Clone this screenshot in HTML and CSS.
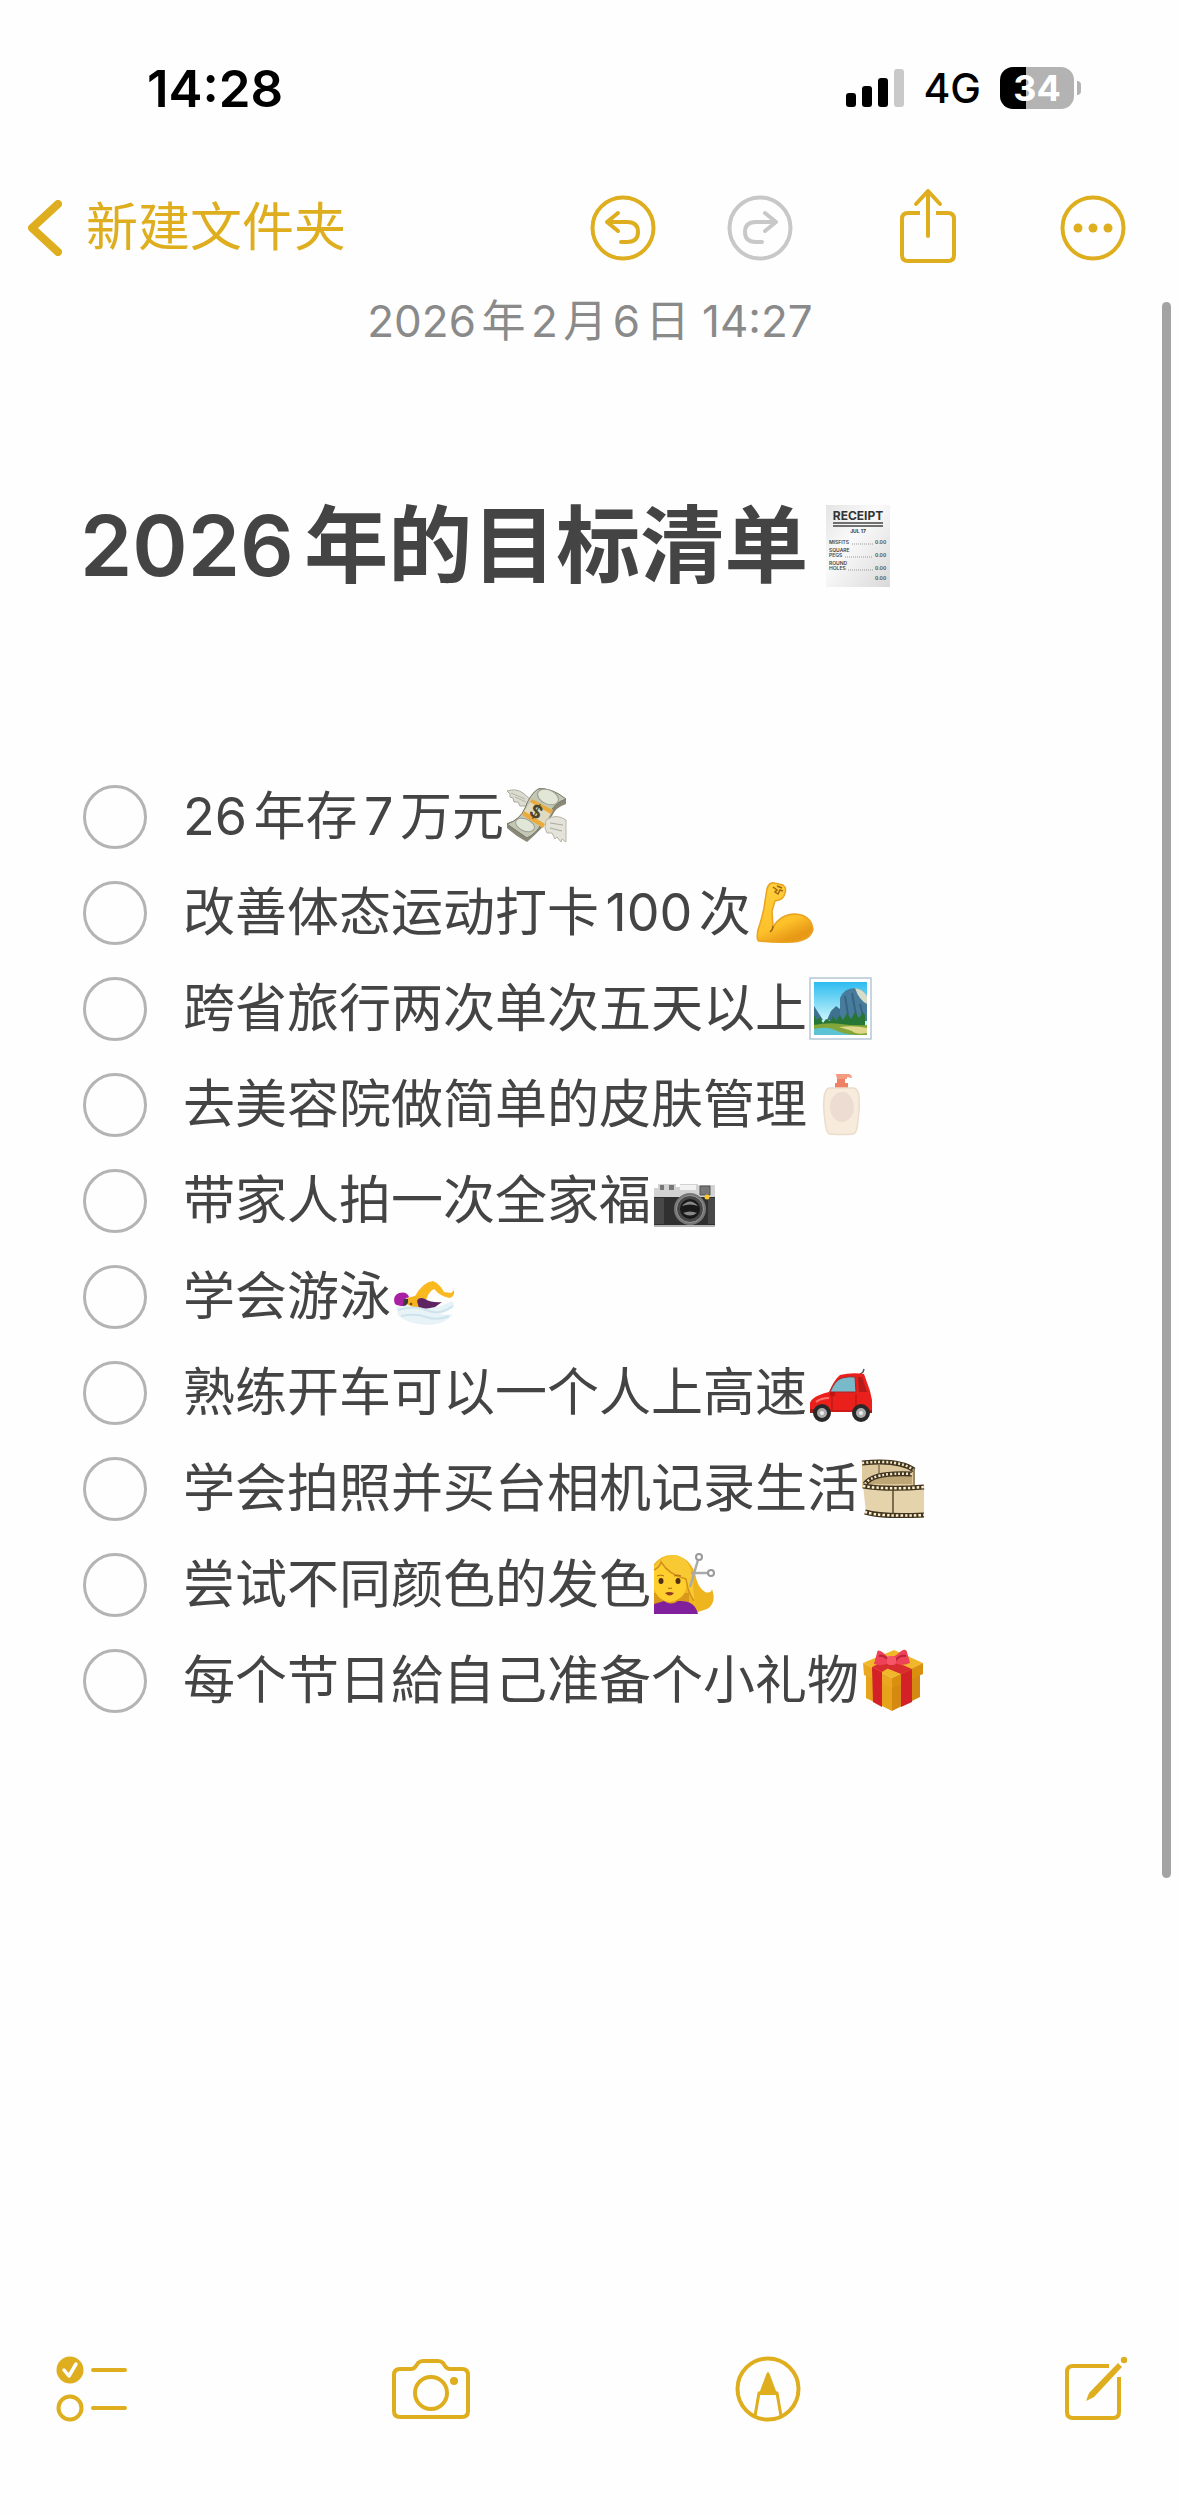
FILE: index.html
```html
<!DOCTYPE html>
<html lang="zh-CN">
<head>
  <meta charset="UTF-8">
  <meta name="viewport" content="width=device-width, initial-scale=1.0">
  <title>2026年的目标清单</title>
  <link rel="stylesheet" href="styles.css">
</head>
<body>
  <div class="status-bar">
    <span class="time">14:28</span>
    <div class="status-right">
      <svg class="signal" width="58" height="38" viewBox="0 0 58 38">
        <rect x="0" y="24" width="10" height="14" rx="3"/>
        <rect x="16" y="17" width="10" height="21" rx="3"/>
        <rect x="32" y="9" width="10" height="29" rx="3"/>
        <rect x="48" y="0" width="10" height="38" rx="3" fill="#c9c9c9"/>
      </svg>
      <span class="network">4G</span>
      <div class="battery"><span>34</span></div>
    </div>
  </div>

  <nav class="top-bar">
    <a class="back" href="#">
      <svg width="34" height="56" viewBox="0 0 34 56"><path d="M30 4L4 28l26 24" stroke-width="8"/></svg>
      <span>新建文件夹</span>
    </a>
    <div class="actions">
      <button type="button" aria-label="撤销">
        <svg width="66" height="66" viewBox="0 0 66 66">
          <circle cx="33" cy="33" r="30.500"/>
          <path d="M28 18L17 27l11 9M17 27h20q11 0 11 10t-11 10h-6" stroke-width="4"/>
        </svg>
      </button>
      <button type="button" aria-label="重做" class="redo" disabled>
        <svg width="66" height="66" viewBox="0 0 66 66">
          <circle cx="33" cy="33" r="30.500"/>
          <path d="M38 18l11 9-11 9M49 27H29q-11 0-11 10t11 10h6" stroke-width="4"/>
        </svg>
      </button>
      <button type="button" aria-label="分享" class="share">
        <svg width="58" height="78" viewBox="0 0 58 78">
          <path d="M21 27H9q-6 0-6 6v36q0 6 6 6h40q6 0 6-6V33q0-6-6-6H37" stroke-linecap="butt"/>
          <path d="M29 50V5M17 18L29 5l12 13" stroke-width="4"/>
        </svg>
      </button>
      <button type="button" aria-label="更多" class="more">
        <svg width="66" height="66" viewBox="0 0 66 66">
          <circle cx="33" cy="33" r="30.500"/>
          <g class="solid"><circle cx="18" cy="33" r="4.500"/><circle cx="33" cy="33" r="4.500"/><circle cx="48" cy="33" r="4.500"/></g>
        </svg>
      </button>
    </div>
  </nav>

  <main class="note">
    <div class="scrollbar"></div>
    <time class="date">2026年2月6日 14:27</time>
    <h1>2026年的目标清单
      <svg class="receipt" width="64" height="84" viewBox="0 0 64 84">
        <defs><linearGradient id="paper" x2="1" y2="1"><stop stop-color="#e4e4e4"/><stop offset=".4" stop-color="#fafafa"/><stop offset="1" stop-color="#d9d9d9"/></linearGradient></defs>
        <path d="M0 1h64v82H0z" fill="url(#paper)"/>
        <path d="M7 19h50M7 22h50" stroke="#444" stroke-width="1.500"/>
        <g font-weight="700" fill="#333">
          <text x="32" y="16" font-size="12" text-anchor="middle">RECEIPT</text>
          <text x="32" y="29" font-size="5" text-anchor="middle">JUL 17</text>
        </g>
        <g font-weight="600" font-size="5" fill="#444">
          <text x="3" y="40">MISFITS</text><text x="49" y="40">0.00</text>
          <text x="3" y="48">SQUARE</text><text x="3" y="53">PEGS</text><text x="49" y="53">0.00</text>
          <text x="3" y="61">ROUND</text><text x="3" y="66">HOLES</text><text x="49" y="66">0.00</text>
          <text x="49" y="76">0.00</text>
        </g>
        <path d="M26 40h21M19 53h28M22 66h25" stroke="#999" stroke-dasharray="1 1"/>
      </svg>
    </h1>

    <ul class="goals">
      <li>
        <input type="checkbox" id="goal1">
        <label for="goal1">26年存7万元<svg class="emoji" viewBox="0 0 64 64">
          <path d="M24 25L19 21 14 21 12 17 8 17 7 13 4 12 4 9 1 6Q10 3 17 8L25 15z" fill="#dddcd0" stroke="#aaa99c"/>
          <path d="M5 8l14 6M9 12l11 5" stroke="#b5b4a8"/>
          <path d="M32 4Q37 0 60 14V19Q50 22 46 31 36 44 21 57 11 52 1 43V38Q14 35 19 23 24 9 32 4z" fill="#898877"/>
          <path d="M32 4Q45 2 60 14 50 17 45 26L35 39Q31 48 21 53L1 39Q14 35 19 23 24 9 32 4z" fill="#c3c7b5" stroke="#777967"/>
          <ellipse cx="42" cy="12" rx="11" ry="7" transform="rotate(24 42 12)" fill="#e2e6d7" stroke="#9da18e"/>
          <ellipse cx="19" cy="40" rx="10" ry="6" transform="rotate(24 19 40)" fill="#e2e6d7" stroke="#9da18e"/>
          <path d="M26 14l21 11-10 18-21-13z" fill="#e0dac1"/>
          <path d="M26 14l21 11-2 4-21-12zM18 26l21 13-2 4-21-13z" fill="#e9ab3c"/>
          <text x="30" y="33" font-size="18" font-weight="700" text-anchor="middle" transform="rotate(28 30 27)" fill="#4d452c">$</text>
          <path d="M40 35Q50 28 60 35V57l-4-3-1 3-4-5-2 2-3-6-5 0-2-5z" fill="#e4e3d9" stroke="#b7b5a8"/>
          <path d="M44 38l13 2M44 43l12 3" stroke="#aaa99c"/>
        </svg></label>
      </li>
      <li>
        <input type="checkbox" id="goal2">
        <label for="goal2">改善体态运动打卡100次<svg class="emoji" viewBox="0 0 64 64">
          <defs><linearGradient id="skin" x2=".4" y2="1"><stop stop-color="#ffd23f"/><stop offset=".75" stop-color="#fdc12a"/><stop offset="1" stop-color="#e89a17"/></linearGradient></defs>
          <path d="M14 8Q16 1 21 2L30 4Q34 7 32 12 31 19 22 20L19 30 20 46Q28 33 42 33 58 34 60 48 58 59 40 61 22 62 6 60 3 59 5 49 11 31 12 20z" fill="url(#skin)" stroke="#e9a320" stroke-width="1.500"/>
          <path d="M20 6l4 3-2 2 3 2 2-4 3 1M24 5l5 2M20 45q0 4-3 6" stroke="#9d6413" stroke-width="1.500" fill="none"/>
        </svg></label>
      </li>
      <li>
        <input type="checkbox" id="goal3">
        <label for="goal3">跨省旅行两次单次五天以上<svg class="emoji" viewBox="0 0 64 64">
          <defs><linearGradient id="sky" x2="0" y2="1"><stop stop-color="#2cbcf0"/><stop offset=".7" stop-color="#c4f3fa"/></linearGradient></defs>
          <path d="M1 1h61v61H1z" fill="#fff" stroke="#b5c8d8" stroke-width="1.500"/>
          <path d="M5 5h53v53H5z" fill="url(#sky)"/>
          <path d="M31 44V21q4-10 15-10 8 1 12 8v25z" fill="#487c9c"/>
          <path d="M46 11q8 1 12 8v8q-8-4-12-16z" fill="#d7ddc8"/>
          <path d="M36 19l3 19M43 16l4 22M51 27l3 12" stroke="#386382" stroke-width="2"/>
          <path d="M5 29l9 14H5zM18 43l4-9 5-5 4 3v13z" fill="#3e718f"/>
          <path d="M5 50V38l3 5 3-3 3 6 3-4 4 2 3-5 3 5 4-6 3 5 4-7 4 6 4-7 4 6 4-6 2 3v16H5z" fill="#287636"/>
          <path d="M5 48q14-3 27-1t26 1v10H5z" fill="#82a638"/>
          <path d="M5 52q13-3 21 1t20 5H5z" fill="#5bc3d4"/>
          <path d="M30 50q16-2 28 1v5q-11 2-15-2z" fill="#dfd78c"/>
        </svg></label>
      </li>
      <li>
        <input type="checkbox" id="goal4">
        <label for="goal4">去美容院做简单的皮肤管理<svg class="emoji" viewBox="0 0 64 64">
          <path d="M28 5h8v5h3v6H26v-6h2z" fill="#ef8064"/>
          <path d="M27 1h13q3 1 3 4l-5-1v2H28z" fill="#f49a80"/>
          <path d="M20 15h25q4 1 5 8 1 12-1 24-1 14-5 14-11 1-23 0-4 0-5-13-2-14-1-23 1-9 5-10z" fill="#f7ebdc" stroke="#ebdccb" stroke-width="1.500"/>
          <ellipse cx="33" cy="34" rx="12" ry="15" fill="#ecdcd1"/>
        </svg></label>
      </li>
      <li>
        <input type="checkbox" id="goal5">
        <label for="goal5">带家人拍一次全家福<svg class="emoji" viewBox="0 0 64 64">
          <path d="M1 19h4v-4h18v3h4v-3h18v1h17v14H1z" fill="#d2d2d2"/>
          <path d="M7 16h4v5H7zM16 16h5v5h-5z" fill="#777"/>
          <path d="M27 16h16v5H27z" fill="#f2f2f2"/>
          <path d="M47 17h10v9H47z" fill="#777" stroke="#555"/>
          <path d="M1 28h61v28H1z" fill="#303030"/>
          <path d="M1 29h10v26H1zM55 29h7v26h-7z" fill="#484848"/>
          <path d="M1 57h61" stroke="#b5b5b5" stroke-width="2"/>
          <circle cx="37" cy="40" r="16" fill="#777"/>
          <circle cx="37" cy="40" r="13.500" fill="#484848" stroke="#999"/>
          <circle cx="37" cy="40" r="10" fill="#191919"/>
          <path d="M29 37q8-9 16 0-8-3-16 0zM30 44q7-3 14 0-7 5-14 0z" fill="#888"/>
          <circle cx="54" cy="28" r="2.500" fill="#ffc92e"/>
        </svg></label>
      </li>
      <li>
        <input type="checkbox" id="goal6">
        <label for="goal6">学会游泳<svg class="emoji" viewBox="0 0 64 64">
          <path d="M3 42q20-7 40 0 9-2 15-6 5 2 2 6-5 5-13 7 9 1 13 0-7 10-24 11Q14 59 5 50z" fill="#e8f3f8"/>
          <path d="M14 33l12-3 3 12q-8 2-15-3z" fill="#f4b41d"/>
          <path d="M22 31q8-14 18-15 7 3 11 11l7 1 3-3q1 6-4 8-9-1-16-9-5 2-8 11z" fill="#fbb920"/>
          <path d="M24 36q2-5 8-2 7 4 17 3l-7 5q-11 3-16 1z" fill="#5d2461"/>
          <path d="M2 39Q-1 31 6 28q8-2 10 4l-4 2-1 7q-6 0-9-2z" fill="#aa20a5"/>
          <path d="M11 34h4q1 7-5 7z" fill="#3d3938"/>
          <circle cx="18" cy="39" r="1.300" fill="#774513"/>
          <path d="M5 45q17-5 28 0 13 6 27-4M8 51q16-3 25 1 11 4 23-1" stroke="#cfe3ed" stroke-width="2" fill="none"/>
        </svg></label>
      </li>
      <li>
        <input type="checkbox" id="goal7">
        <label for="goal7">熟练开车可以一个人上高速<svg class="emoji" viewBox="0 0 64 64">
          <path d="M50 14l4-3 1-3" stroke="#555" stroke-width="1.500" fill="none"/>
          <path d="M1 51V42q2-7 19-11 5-12 11-17 12-3 24-1l6 17 2 9v12H2z" fill="#e9201c"/>
          <path d="M21 31q5-12 12-14 8-2 13-1l1 15z" fill="#78bac9" stroke="#a22a29"/>
          <path d="M49 16h4l5 15h-8z" fill="#b41c1c"/>
          <path d="M23 33v17h24V33" stroke="#b21413" fill="none"/>
          <path d="M20 37q-8 0-13 4" stroke="#ff746d" stroke-width="2" fill="none"/>
          <path d="M1 48h5v4H1zM58 49h5v3h-5z" fill="#a21b1c"/>
          <g fill="#adadad" stroke="#292929" stroke-width="4"><circle cx="13" cy="52" r="7"/><circle cx="52" cy="52" r="7"/></g>
          <g fill="#eee"><circle cx="13" cy="52" r="2"/><circle cx="52" cy="52" r="2"/></g>
          <path d="M21 31h5v4h-5z" fill="#c31415"/>
        </svg></label>
      </li>
      <li>
        <input type="checkbox" id="goal8">
        <label for="goal8">学会拍照并买台相机记录生活<svg class="emoji" viewBox="0 0 64 64">
          <path d="M1 4q34-3 53 7v20H1z" fill="#ddc99d"/>
          <path d="M1 6q37-4 52 7" stroke="#41351f" stroke-width="5" fill="none"/>
          <path d="M1 6q37-4 52 7" stroke="#f1e5c6" stroke-width="2.500" stroke-dasharray="2 2" fill="none"/>
          <path d="M18 8v17M53 11v17" stroke="#594a2c"/>
          <path d="M3 28q6-14 48-12v11H12L3 31z" fill="#bfa676"/>
          <path d="M4 27q8-12 47-10" stroke="#41351f" stroke-width="5" fill="none"/>
          <path d="M4 27q8-12 47-10" stroke="#f1e5c6" stroke-width="2.500" stroke-dasharray="2 2" fill="none"/>
          <path d="M2 28q25 3 61 0v33q-35 0-58-5z" fill="#e5d4ab"/>
          <path d="M2 29q25 4 61 1M4 55q16 5 59 3" stroke="#41351f" stroke-width="5" fill="none"/>
          <path d="M2 29q25 4 61 1M4 55q16 5 59 3" stroke="#fff1cf" stroke-width="2.500" stroke-dasharray="2.500 2" fill="none"/>
          <path d="M32 32v25" stroke="#594a2c" stroke-width="1.500"/>
        </svg></label>
      </li>
      <li>
        <input type="checkbox" id="goal9">
        <label for="goal9">尝试不同颜色的发色<svg class="emoji" viewBox="0 0 64 64">
          <path d="M1 11Q9 1 21 2 36 4 42 20 44 34 52 39 58 41 59 36 64 50 54 56L45 59H1z" fill="#efb51e"/>
          <path d="M1 40h35v19H1z" fill="#d99a1b"/>
          <path d="M11 43h13v9H11z" fill="#e3a01b"/>
          <path d="M1 51l10-3q7 5 14 0 17-1 20 13H1z" fill="#80209c"/>
          <path d="M1 17q5-3 7-8 8 10 26 17 1 20-17 23Q5 48 1 36z" fill="#ffd02d"/>
          <path d="M5 9Q13 1 23 2 35 5 39 20q1 17 3 31-7-10-9-24Q16 22 8 9 7 15 1 18v-5z" fill="#f9c934"/>
          <path d="M1 17q6-3 7-8 8 13 25 17 2 14 8 22" stroke="#d29217" stroke-width="1.500" fill="none"/>
          <g fill="#513114"><ellipse cx="8" cy="28" rx="2.500" ry="3"/><ellipse cx="25" cy="28" rx="2.500" ry="3"/></g>
          <path d="M4 23q4-2 7 0M21 23q4-2 7 0M15 35q2 1 4 0" stroke="#a86b14" fill="none"/>
          <path d="M12 40q4-2 9 0-4 5-9 0z" fill="#913e26"/>
          <path d="M37 34l8-27M38 20l17 0" stroke="#aaa" stroke-width="2.500"/>
          <g stroke="#999" fill="none" stroke-width="2"><circle cx="46" cy="4" r="3"/><circle cx="58" cy="20" r="3"/></g>
        </svg></label>
      </li>
      <li>
        <input type="checkbox" id="goal10">
        <label for="goal10">每个节日給自己准备个小礼物<svg class="emoji" viewBox="0 0 64 64">
          <path d="M5 21l26 12v29L5 49z" fill="#e7a31a"/>
          <path d="M31 33l28-13v28L31 62z" fill="#d48a12"/>
          <path d="M2 14L33 1l29 13-31 15z" fill="#f1b72a"/>
          <path d="M2 14l29 15v10L3 26z" fill="#eaa71f"/>
          <path d="M31 29l31-15v11L31 39z" fill="#d9900e"/>
          <path d="M11 18l10 5v35l-9-5zM40 25l11-5v33l-11 5z" fill="#d32127"/>
          <path d="M11 18l27-13 7 3-24 15zM23 8l28 12-11 5-27-11z" fill="#d92c31"/>
          <path d="M29 10Q16-3 16 4l-3 11q9 3 17-2zM32 10Q44-4 46 3l3 11q-8 4-18-1z" fill="#ed4257"/>
          <path d="M18 7q6-1 10 5M45 7q-7-1-11 5" stroke="#b92439" stroke-width="2" fill="none"/>
          <rect x="26" y="7" width="9" height="9" rx="3" fill="#f65668"/>
        </svg></label>
      </li>
    </ul>
  </main>

  <footer class="bottom-bar">
    <button type="button" aria-label="核对清单">
      <svg width="72" height="66" viewBox="0 0 72 66">
        <circle class="solid" cx="14" cy="14" r="13.500"/>
        <path d="M8 14l5 6 7-12" stroke="#fefefe" stroke-width="3.500"/>
        <circle cx="14" cy="52" r="11.500" stroke-width="4"/>
        <path d="M37 14h32M37 52h32" stroke-width="4"/>
      </svg>
    </button>
    <button type="button" aria-label="相机">
      <svg width="80" height="62" viewBox="0 0 80 62">
        <path d="M9 11h11q3 0 5-3l2-3q2-2 5-2h15q3 0 5 2l2 3q2 3 5 3h12q6 0 6 6v36q0 6-6 6H9q-6 0-6-6V17q0-6 6-6z" stroke-width="4"/>
        <circle cx="40" cy="35" r="16" stroke-width="4"/>
        <circle class="solid" cx="63" cy="23" r="4"/>
      </svg>
    </button>
    <button type="button" aria-label="标记">
      <svg width="66" height="66" viewBox="0 0 66 66">
        <circle cx="33" cy="33" r="30.500"/>
        <path class="solid" d="M33 16q1 0 2 3l6 16q2 1 2 4H23q0-3 2-4l6-16q1-3 2-3z"/>
        <path d="M24 37l-4 23M42 37l4 23" stroke-width="3"/>
      </svg>
    </button>
    <button type="button" aria-label="新建备忘录">
      <svg width="64" height="66" viewBox="0 0 64 66">
        <path d="M45 10H9q-6 0-6 6v40q0 6 6 6h40q6 0 6-6V21" stroke-width="4" stroke-linecap="butt"/>
        <path class="solid" d="M54 7l4 4-28 30-8 4 3-8z"/>
        <circle class="solid" cx="60" cy="4" r="3.200"/>
      </svg>
    </button>
  </footer>
</body>
</html>
```

FILE: styles.css
```css
* {
  box-sizing: border-box;
}
body {
  margin: 0;
  min-height: 100vh;
  display: flex;
  flex-direction: column;
  background: #fefefe;
  color: #444;
  font-family: Inter, "Noto Sans CJK SC", sans-serif;
  text-autospace: normal;
}
button {
  padding: 0;
  border: 0;
  background: none;
  color: inherit;
}
svg {
  display: block;
}

/* status bar */
.status-bar {
  display: flex;
  justify-content: space-between;
  align-items: center;
  height: 176px;
  padding: 0 98px 0 147px;
  color: #000;
}
.time {
  font-size: 51px;
  font-weight: 600;
}
.status-right {
  display: flex;
  align-items: center;
}
.network {
  margin: 0 19px;
  font-size: 41px;
  font-weight: 500;
}
.battery {
  position: relative;
  width: 74px;
  height: 42px;
  margin-right: 8px;
  border-radius: 13px;
  background: linear-gradient(to right, #000 35%, #b3b3b3 35%);
  color: #fff;
  font-size: 36px;
  font-weight: 700;
  line-height: 42px;
  text-align: center;
}
.battery::after {
  content: "";
  position: absolute;
  top: 14px;
  right: -7px;
  width: 4px;
  height: 14px;
  border-radius: 0 4px 4px 0;
  background: #b3b3b3;
}

/* toolbars */
.top-bar,
.bottom-bar {
  display: flex;
  justify-content: space-between;
  align-items: center;
  color: #deae1e;
}
.top-bar {
  height: 104px;
  padding: 0 54px 0 28px;
}
.top-bar svg,
.bottom-bar svg {
  fill: none;
  stroke: currentColor;
  stroke-width: 4;
  stroke-linecap: round;
  stroke-linejoin: round;
}
.top-bar .solid,
.bottom-bar .solid {
  fill: currentColor;
  stroke: none;
}
.back {
  display: flex;
  align-items: center;
  gap: 24px;
  color: inherit;
  font-size: 52px;
  line-height: 64px;
  text-decoration: none;
}
.actions {
  display: flex;
  align-items: center;
}
.redo {
  margin-left: 71px;
  color: #c8c8c8;
}
.share {
  margin-left: 106px;
  padding-bottom: 6px;
}
.more {
  margin-left: 103px;
}
.bottom-bar {
  margin-top: auto;
  padding: 0 52px 94px 56px;
}

/* note */
.note {
  position: relative;
  padding: 12px 80px 0;
}
.scrollbar {
  position: absolute;
  top: 22px;
  right: 9px;
  width: 9px;
  height: 1576px;
  border-radius: 5px;
  background: #a3a3a3;
}
.date {
  display: block;
  color: #8a8a8a;
  font-size: 44px;
  line-height: 58px;
  text-align: center;
}
h1 {
  display: flex;
  align-items: center;
  gap: 18px;
  margin: 136px 0 0;
  font-size: 84px;
  font-weight: 600;
  line-height: 120px;
}
.goals {
  display: flex;
  flex-direction: column;
  gap: 32px;
  margin: 179px 0 0;
  padding: 0 0 0 3px;
  list-style: none;
}
.goals li {
  display: flex;
  align-items: center;
  gap: 36px;
}
.goals input {
  appearance: none;
  flex: none;
  width: 64px;
  height: 64px;
  margin: 0;
  border: 3px solid #b4b4b4;
  border-radius: 50%;
}
.goals input:checked {
  border-color: #deae1e;
  background: #deae1e;
}
.goals label {
  display: flex;
  align-items: center;
  gap: 2px;
  font-size: 52px;
  line-height: 64px;
}
.emoji {
  flex: none;
  width: 64px;
  height: 64px;
}
```
